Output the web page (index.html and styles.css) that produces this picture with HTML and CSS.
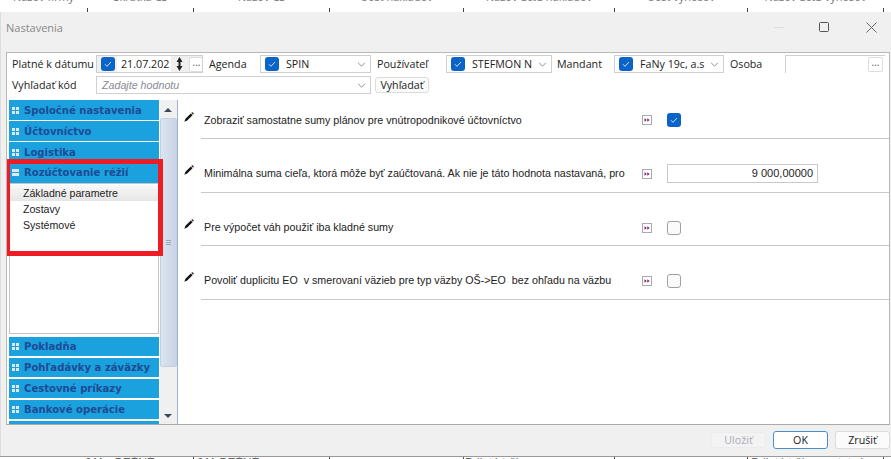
FILE: index.html
```html
<!DOCTYPE html>
<html lang="sk">
<head>
<meta charset="utf-8">
<title>Nastavenia</title>
<link rel="stylesheet" href="styles.css">
</head>
<body>
<svg class="defs" width="0" height="0" aria-hidden="true">
  <symbol id="chev" viewBox="0 0 10 6"><path d="M1 1l4 4 4-4" fill="none" stroke="#777" stroke-width="1"/></symbol>
  <symbol id="check" viewBox="0 0 14 14"><path d="M4 7.300l2 2 4-4.300" fill="none" stroke="#cfe2f7" stroke-width="1"/></symbol>
  <symbol id="pencil" viewBox="0 0 10 10"><path d="M.3 9.700L1.500 6.800 6.800 1.500 8.500 3.200 3.200 8.500z" fill="#111"/><path d="M7.300 1l1-1 1.700 1.700-1 1z" fill="#333"/></symbol>
  <symbol id="ff" viewBox="0 0 10 10"><rect x=".5" y=".5" width="9" height="9" fill="#fff" stroke="#aaa"/><path d="M2.500 3.200l2.300 1.800-2.300 1.800zM5.300 3.200l2.300 1.800-2.300 1.800z" fill="#7a1a6e"/></symbol>
  <symbol id="plus" viewBox="0 0 7 7"><path d="M0 0h3v3H0zM4 0h3v3H4zM0 4h3v3H0zM4 4h3v3H4z" fill="#dfe8f2"/></symbol>
  <symbol id="minus" viewBox="0 0 7 7"><path d="M0 0h7v3H0zM0 4h7v3H0z" fill="#dfe8f2"/></symbol>
</svg>

<div class="behind behind-top">
  <span class="bcell c1">Názov firmy</span><span class="bcell c2">Skrátka CS</span><span class="bcell c3">Názov CS</span><span class="bcell c4">Účet nákladov</span><span class="bcell c5">Názov účtu nákladov</span><span class="bcell c6">Účet výnosov</span><span class="bcell c7">Názov účtu výnosov</span>
</div>

<main class="dialog">
  <header class="titlebar">
    <span class="title">Nastavenia</span>
    <span class="winbtn win-min"></span>
    <svg class="winbtn win-max" width="10" height="10" viewBox="0 0 10 10"><rect x=".5" y=".5" width="9" height="9" rx="1" fill="none" stroke="#555"/></svg>
    <svg class="winbtn win-close" width="11" height="11" viewBox="0 0 11 11"><path d="M.5.500l10 10M10.500.500l-10 10" stroke="#666" fill="none"/></svg>
  </header>

  <section class="panel">
    <div class="filters">
      <div class="frow">
        <label class="lbl l-date">Platné k dátumu</label>
        <div class="ctl ctl-date">
          <svg class="cb"><use href="#check"/></svg>
          <span class="val date">21.07.202</span>
          <svg class="spin" width="7" height="14" viewBox="0 0 7 14"><path d="M3.500 0l3 5H4.500v4H6.500l-3 5-3-5h2V5h-2z" fill="#222"/></svg>
          <span class="dots">...</span>
        </div>
        <label class="lbl l-agenda">Agenda</label>
        <div class="ctl ctl-agenda">
          <svg class="cb"><use href="#check"/></svg>
          <span class="val v-wide">SPIN</span>
          <span class="arrow"><svg width="9" height="5"><use href="#chev"/></svg></span>
        </div>
        <label class="lbl l-user">Používateľ</label>
        <div class="ctl ctl-user">
          <svg class="cb"><use href="#check"/></svg>
          <span class="val v-wide">STEFMON N</span>
          <span class="arrow arrow-s"><svg width="9" height="5"><use href="#chev"/></svg></span>
        </div>
        <label class="lbl l-mand">Mandant</label>
        <div class="ctl ctl-mand">
          <svg class="cb"><use href="#check"/></svg>
          <span class="val v-wide">FaNy 19c, a.s</span>
          <span class="arrow arrow-s"><svg width="9" height="5"><use href="#chev"/></svg></span>
        </div>
        <label class="lbl l-osoba">Osoba</label>
        <div class="ctl ctl-osoba"><span class="dots dots-o">...</span></div>
      </div>
      <div class="frow frow2">
        <label class="lbl l-date">Vyhľadať kód</label>
        <div class="ctl ctl-search">
          <span class="placeholder">Zadajte hodnotu</span>
          <span class="arrow"><svg width="9" height="5"><use href="#chev"/></svg></span>
        </div>
        <button class="btn btn-search" type="button">Vyhľadať</button>
      </div>
    </div>

    <div class="workspace">
      <nav class="tree">
        <div class="acc"><svg class="ico"><use href="#plus"/></svg>Spoločné nastavenia</div>
        <div class="acc"><svg class="ico"><use href="#plus"/></svg>Účtovníctvo</div>
        <div class="acc"><svg class="ico"><use href="#plus"/></svg>Logistika</div>
        <div class="acc acc-open"><svg class="ico"><use href="#minus"/></svg>Rozúčtovanie réžií</div>
        <ul class="acc-body">
          <li class="selected">Základné parametre</li>
          <li>Zostavy</li>
          <li>Systémové</li>
        </ul>
        <div class="acc"><svg class="ico"><use href="#plus"/></svg>Pokladňa</div>
        <div class="acc"><svg class="ico"><use href="#plus"/></svg>Pohľadávky a záväzky</div>
        <div class="acc"><svg class="ico"><use href="#plus"/></svg>Cestovné príkazy</div>
        <div class="acc"><svg class="ico"><use href="#plus"/></svg>Bankové operácie</div>
        <div class="acc"><svg class="ico"><use href="#plus"/></svg>Administrácia</div>
      </nav>
      <div class="scrollbar">
        <span class="sb-arrow up"></span>
        <div class="thumb"><span class="grip"></span></div>
        <span class="sb-arrow down"></span>
      </div>
      <div class="params">
        <div class="param">
          <svg class="pencil"><use href="#pencil"/></svg>
          <div class="pbody"><span class="ptext">Zobraziť samostatne sumy plánov pre vnútropodnikové účtovníctvo</span><svg class="ff"><use href="#ff"/></svg><svg class="cb pcb"><use href="#check"/></svg></div>
        </div>
        <div class="param">
          <svg class="pencil"><use href="#pencil"/></svg>
          <div class="pbody"><span class="ptext">Minimálna suma cieľa, ktorá môže byť zaúčtovaná. Ak nie je táto hodnota nastavaná, pro</span><svg class="ff"><use href="#ff"/></svg><span class="num">9 000,00000</span></div>
        </div>
        <div class="param">
          <svg class="pencil"><use href="#pencil"/></svg>
          <div class="pbody"><span class="ptext">Pre výpočet váh použiť iba kladné sumy</span><svg class="ff"><use href="#ff"/></svg><span class="cb-off"></span></div>
        </div>
        <div class="param">
          <svg class="pencil"><use href="#pencil"/></svg>
          <div class="pbody"><span class="ptext">Povoliť duplicitu EO&nbsp; v smerovaní väzieb pre typ väzby OŠ-&gt;EO&nbsp; bez ohľadu na väzbu</span><svg class="ff"><use href="#ff"/></svg><span class="cb-off"></span></div>
        </div>
      </div>
    </div>
    <div class="highlight"></div>
  </section>

  <footer class="footer">
    <button class="btn fbtn disabled" type="button">Uložiť</button>
    <button class="btn fbtn ok" type="button">OK</button>
    <button class="btn fbtn" type="button">Zrušiť</button>
  </footer>
</main>

<div class="behind behind-bottom">
  <span class="dcell d1">011 - BEŽNÉ</span><span class="dcell d2">011 BEŽNÉ</span><span class="dcell d3">- - - -</span><span class="dcell d4">Prijaté tržby</span><span class="dcell d5">- - - -</span><span class="dcell d6">Prijaté tržby - ostatné</span>
</div>
</body>
</html>
```
FILE: styles.css
```css
* { box-sizing: border-box; }
html, body { margin: 0; padding: 0; }
body {
  width: 891px; height: 459px; overflow: hidden; background: #fff;
  font-family: "Open Sans", "Liberation Sans", sans-serif; font-size: 10.700px; color: #222;
}
.defs { position: absolute; }

.behind { display: flex; overflow: hidden; background: #fff; }
.behind-top { height: 12px; align-items: flex-start; }
.bcell {
  display: block; flex: none; height: 22px; margin-top: -10px; line-height: 14px; color: #777; font-size: 11px;
  text-align: center; white-space: nowrap; overflow: hidden;
  border-right: 1px solid #444; border-image: linear-gradient(transparent 77%, #444 77%) 1;
}
.behind-bottom { height: 3px; border-top: 1px solid #999; font-family: "Liberation Sans", sans-serif; }
.dcell {
  display: block; flex: none; height: 14px; line-height: 14px; margin-top: -1px;
  color: #666; font-size: 12px; white-space: nowrap; overflow: hidden; border-right: 1px solid #555;
}
.d1 { width: 194px; padding-left: 85px; }
.d2 { width: 136px; padding-left: 3px; }
.d3 { width: 134px; padding-left: 4px; }
.d4 { width: 151px; padding-left: 1px; }
.d5 { width: 133px; padding-left: 5px; }
.d6 { width: 136px; padding-left: 3px; }
.c1 { width: 88px; } .c2 { width: 106px; } .c3 { width: 136px; } .c4 { width: 134px; }
.c5 { width: 151px; } .c6 { width: 133px; } .c7 { width: 136px; }

.dialog { height: 444px; background: #f0f0f0; display: flex; flex-direction: column; border-left: 1px solid #ddd; }
.titlebar { height: 40px; flex: none; display: flex; align-items: center; padding: 0 0 10px 5px; color: #888; }
.title { flex: 1; font-size: 11px; }
.winbtn { flex: none; }
.win-min { width: 10px; height: 1px; background: #ddd; margin-right: 35px; }
.win-max { margin-right: 37px; }
.win-close { margin-right: 14px; }

.panel {
  position: relative; height: 373px; flex: none; margin-left: 5px; margin-right: 1px;
  background: #fff; border: 1px solid #b8b8b8; border-bottom-color: #aaa; overflow: hidden;
  display: flex; flex-direction: column;
}
.filters { flex: none; padding: 2px 0 0 5px; height: 47px; }
.frow { display: flex; align-items: center; height: 18px; }
.frow2 { margin-top: 3px; }
.lbl { flex: none; white-space: nowrap; color: #222; }
.l-date { width: 84px; }
.l-agenda { width: 51px; margin-left: 6px; }
.l-user { width: 69px; margin-left: 6px; }
.l-mand { width: 57px; margin-left: 5px; }
.l-osoba { width: 55px; margin-left: 6px; }

.ctl {
  flex: none; height: 18px; display: flex; align-items: center; position: relative;
  border: 1px solid #d0d0d0; background: #fff; overflow: hidden; white-space: nowrap;
}
.ctl-date { width: 107px; background: #f0f0f0; }
.ctl-agenda { width: 111px; }
.ctl-user { width: 106px; }
.ctl-mand { width: 110px; }
.ctl-osoba { width: 100px; border-bottom: 0; border-right: 0; justify-content: flex-end; }
.ctl-search { width: 275px; }
.cb { flex: none; width: 14px; height: 14px; margin-left: 4px; background: #0a64c8; border-radius: 3px; }
.val { flex: none; background: #fff; height: 16px; line-height: 16px; overflow: hidden; }
.date { width: 54px; padding-left: 4px; margin-left: 2px; }
.v-wide { margin-left: 7px; flex: 1; min-width: 0; }
.spin { flex: none; margin-left: 5px; }
.dots {
  flex: none; width: 15px; height: 15px; margin-left: 6px; background: #fff; border: 1px solid #ddd;
  border-radius: 2px; line-height: 9px; text-align: center; font-size: 10px; color: #555;
}
.dots-o { margin: 0 2px 0 0; height: 15px; }
.arrow { flex: none; width: 17px; height: 16px; display: flex; align-items: center; justify-content: center; background: #fff; margin-left: auto; }
.arrow-s { width: 18px; }
.arrow svg { display: block; }
.placeholder { flex: 1; padding-left: 5px; font-style: italic; color: #8a8a96; font-family: "Liberation Sans", sans-serif; font-size: 10.700px; }
.btn {
  font: inherit; color: #222; background: #fbfbfb; border: 1px solid #dcdcdc; border-radius: 3px; padding: 0;
}
.btn-search { width: 54px; height: 16px; margin-left: 4px; line-height: 13px; }

.workspace { flex: 1; min-height: 0; display: flex; align-items: stretch; padding-left: 2px; }
.tree { width: 150px; flex: none; display: flex; flex-direction: column; gap: 1.500px; overflow: hidden; }
.acc {
  flex: none; height: 19.500px; background: #1ba1dd; color: #1f4a96; display: flex; align-items: center;
  font-family: "DejaVu Sans", sans-serif; font-weight: 700; font-size: 10.100px; white-space: nowrap; padding: 1px 0 0 3px;
}
.acc-open { padding-top: 0; }
.ico { flex: none; width: 7px; height: 7px; margin-right: 5px; }
.acc-body {
  flex: none; height: 151px; margin: -1px 0 1px; padding: 1px 0 0; list-style: none; background: #fff; border: 1px solid #c4c4c4;
  font-family: "Liberation Sans", sans-serif; font-size: 10.600px; color: #222;
}
.acc-body li { height: 16px; line-height: 16px; padding-left: 13px; }
.acc-body .selected { background: linear-gradient(#f8f8f8, #e6e6e6); }
.scrollbar {
  flex: none; width: 18px; margin-left: 1px; background: #f0f0f0; border-right: 1px solid #9db4d6;
  position: relative; display: flex; flex-direction: column; align-items: stretch;
}
.thumb {
  position: absolute; left: 0; right: 0; top: 18px; height: 249px; border: 1px solid #c4cfe0; border-radius: 2px;
  background: linear-gradient(90deg, #dde4ef, #c9d4e6); display: flex; align-items: center; justify-content: center;
}
.grip { width: 5px; height: 6px; background: repeating-linear-gradient(#9aa8bf 0 1px, transparent 1px 2px); }
.sb-arrow { position: absolute; left: 4px; width: 0; height: 0; border-left: 4px solid transparent; border-right: 4px solid transparent; }
.sb-arrow.up { top: 8px; border-bottom: 4px solid #3c4a60; }
.sb-arrow.down { bottom: 6px; border-top: 4px solid #3c4a60; }

.params { flex: 1; min-width: 0; display: flex; flex-direction: column; padding-left: 6px; }
.param { height: 53.600px; flex: none; display: flex; align-items: flex-start; }
.param:first-child { height: 39px; }
.pencil { flex: none; width: 10px; height: 10px; margin: 12px 7px 0 0; }
.param:not(:first-child) .pencil { margin-top: 26px; }
.pbody {
  flex: 1; min-width: 0; height: 100%; border-bottom: 1px solid #c8c8c8; display: flex; align-items: flex-start;
  font-family: "Liberation Sans", sans-serif; font-size: 10.700px; padding-left: 3px; position: relative;
}
.ptext { width: 438px; flex: none; margin-top: 13px; white-space: nowrap; overflow: hidden; line-height: 14px; }
.param:not(:first-child) .ptext { margin-top: 27px; }
.ff { flex: none; width: 10px; height: 10px; margin-top: 15px; margin-right: 15px; }
.param:not(:first-child) .ff { margin-top: 30px; }
.pcb { margin: 13px 0 0 0; }
.cb-off { flex: none; width: 14px; height: 14px; margin-top: 28px; border: 1px solid #a0a0a0; border-radius: 3px; background: #fafafa; }
.num {
  flex: none; width: 151px; height: 19px; margin-top: 25px; border: 1px solid #c8c8c8; text-align: right; padding-right: 4px;
  line-height: 17px; font-size: 11px;
}

.highlight { position: absolute; left: -2px; top: 106px; width: 158px; height: 97px; border: 5px solid #ee1c25; pointer-events: none; }

.footer { flex: 1; display: flex; justify-content: flex-end; align-items: flex-start; gap: 7px; padding: 6px 1px 0 0; }
.fbtn { width: 55px; height: 18px; line-height: 15px; }
.ok { border-color: #4a8ec9; background: #fff; border-radius: 3px; }
.disabled { background: #f3f3f3; border-color: #ececec; color: #aab; margin-top: 1px; height: 16px; }
```
